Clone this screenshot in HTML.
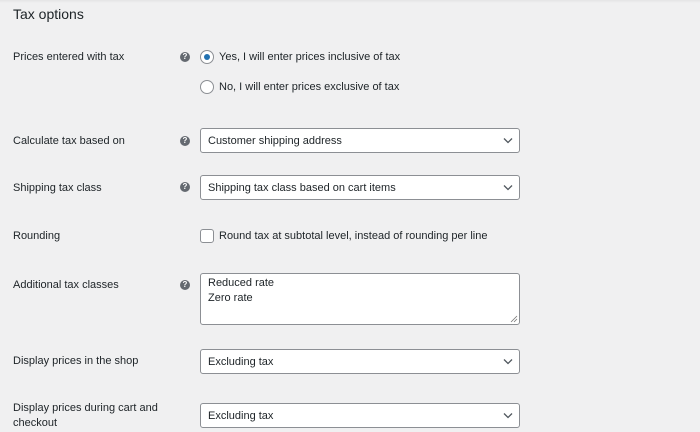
<!DOCTYPE html>
<html><head><style>
body{margin:0;width:700px;height:432px;background:#f0f0f1;font-family:"Liberation Sans",sans-serif;color:#1d2327;font-size:11px;position:relative;overflow:hidden}
.a{position:absolute;white-space:nowrap;line-height:14px}
.h{position:absolute;width:10px;height:10px;border-radius:50%;background:#646970;color:#fff;font-size:8px;font-weight:bold;text-align:center;line-height:10px}
.sel{position:absolute;left:200px;width:318px;height:23px;background:#fff;border:1px solid #8c8f94;border-radius:3px}
.sel span{position:absolute;left:7px;top:5px;line-height:14px}
.sel svg{position:absolute;right:6px;top:8px}
.r{position:absolute;width:12px;height:12px;border:1px solid #8c8f94;border-radius:50%;background:#fff}
</style></head><body>
<div style="position:absolute;left:0;top:0;width:700px;height:3px;background:linear-gradient(#e4e4e5,#f0f0f1)"></div>
<div class="a" style="left:13px;top:5px;font-size:14px;line-height:18px">Tax options</div>

<div class="a" style="left:13px;top:50px">Prices entered with tax</div>
<div class="h" style="left:180px;top:52px">?</div>
<div class="r" style="left:200px;top:50px"><div style="position:absolute;left:3px;top:3px;width:6px;height:6px;border-radius:50%;background:#2271b1"></div></div>
<div class="a" style="left:219px;top:50px">Yes, I will enter prices inclusive of tax</div>
<div class="r" style="left:200px;top:80px"></div>
<div class="a" style="left:219px;top:80px">No, I will enter prices exclusive of tax</div>

<div class="a" style="left:13px;top:134px">Calculate tax based on</div>
<div class="h" style="left:180px;top:136px">?</div>
<div class="sel" style="top:128px"><span>Customer shipping address</span><svg width="10" height="7"><path d="M1 1.5L5 5.5L9 1.5" stroke="#50575e" stroke-width="1.3" fill="none"/></svg></div>

<div class="a" style="left:13px;top:181px">Shipping tax class</div>
<div class="h" style="left:180px;top:182px">?</div>
<div class="sel" style="top:175px"><span>Shipping tax class based on cart items</span><svg width="10" height="7"><path d="M1 1.5L5 5.5L9 1.5" stroke="#50575e" stroke-width="1.3" fill="none"/></svg></div>

<div class="a" style="left:13px;top:229px">Rounding</div>
<div style="position:absolute;left:200px;top:229px;width:12px;height:12px;border:1px solid #8c8f94;border-radius:3px;background:#fff"></div>
<div class="a" style="left:219px;top:229px">Round tax at subtotal level, instead of rounding per line</div>

<div class="a" style="left:13px;top:278px">Additional tax classes</div>
<div class="h" style="left:180px;top:280px">?</div>
<div style="position:absolute;left:200px;top:273px;width:318px;height:50px;background:#fff;border:1px solid #8c8f94;border-radius:3px">
<div class="a" style="left:7px;top:2px">Reduced rate</div>
<div class="a" style="left:7px;top:17px">Zero rate</div>
<svg style="position:absolute;right:1px;bottom:1px" width="8" height="8"><path d="M7 1L1 7M7 4L4 7" stroke="#777" stroke-width="0.8"/></svg>
</div>

<div class="a" style="left:13px;top:354px">Display prices in the shop</div>
<div class="sel" style="top:349px"><span>Excluding tax</span><svg width="10" height="7"><path d="M1 1.5L5 5.5L9 1.5" stroke="#50575e" stroke-width="1.3" fill="none"/></svg></div>

<div class="a" style="left:13px;top:401px">Display prices during cart and</div>
<div class="a" style="left:13px;top:416px">checkout</div>
<div class="sel" style="top:403px"><span>Excluding tax</span><svg width="10" height="7"><path d="M1 1.5L5 5.5L9 1.5" stroke="#50575e" stroke-width="1.3" fill="none"/></svg></div>
</body></html>
